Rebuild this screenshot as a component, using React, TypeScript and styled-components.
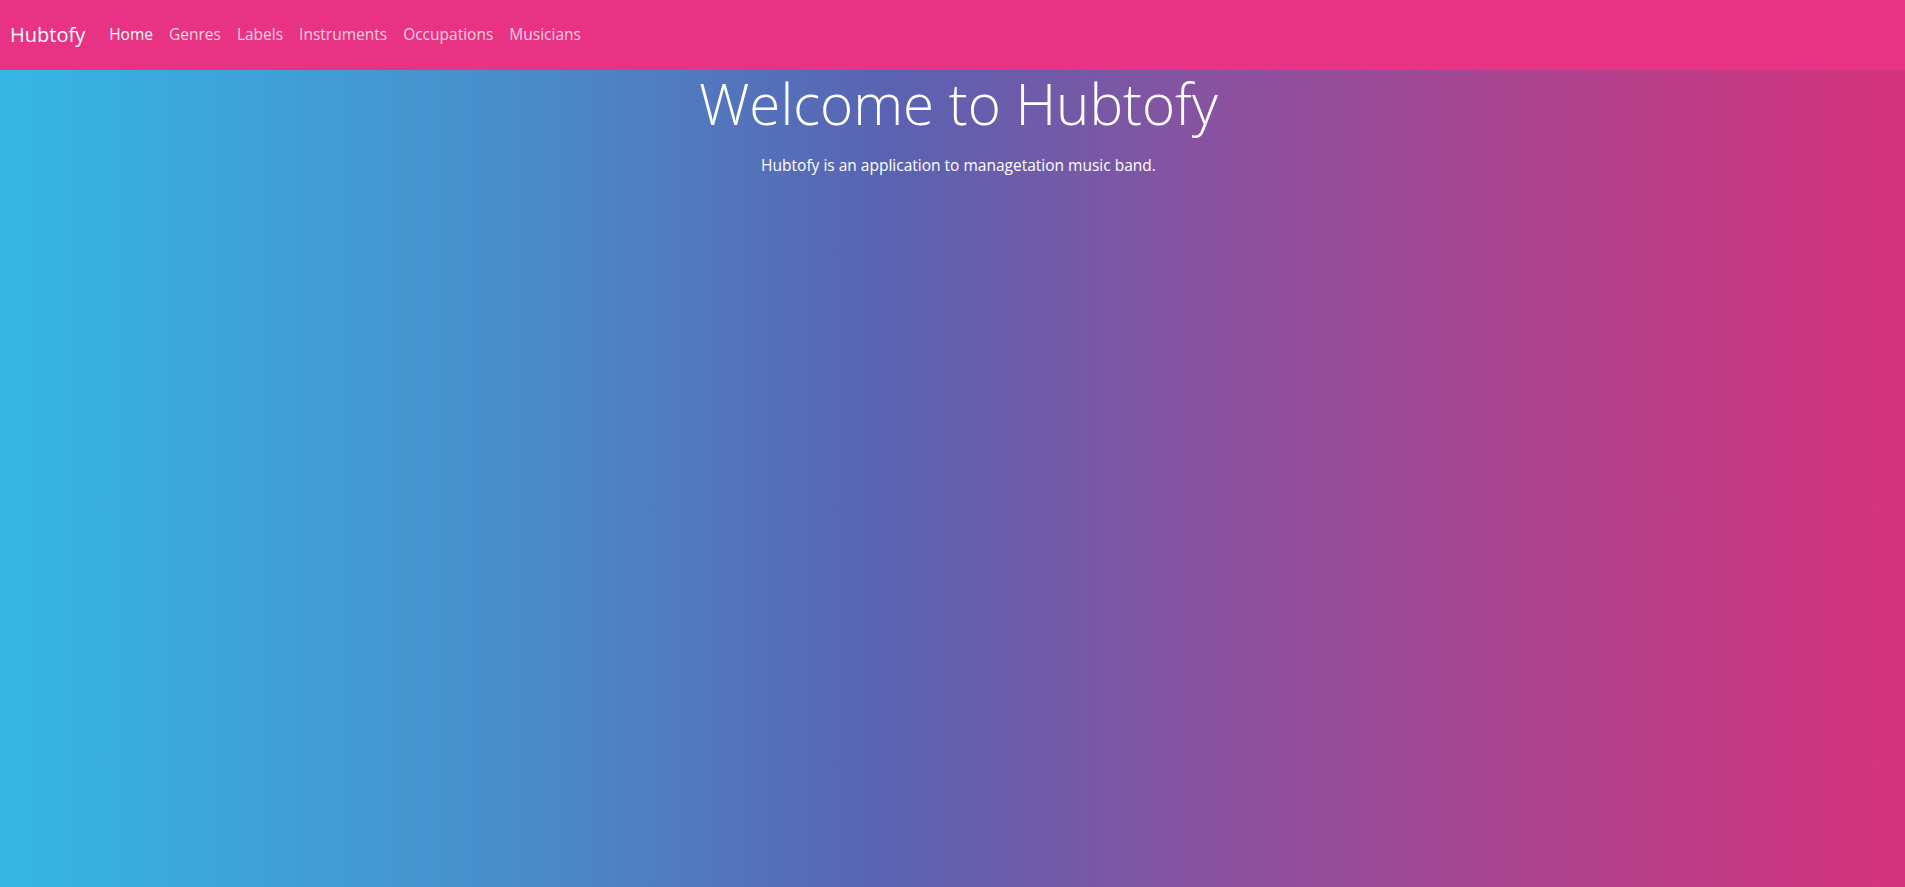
import React from "react";
import styled, { createGlobalStyle } from "styled-components";

const Global = createGlobalStyle`
  html, body { margin: 0; padding: 0; }
  body {
    font-family: "Open Sans", "Noto Sans", "Liberation Sans", sans-serif;
    color: #fff;
  }
  * { box-sizing: border-box; }
`;

const Page = styled.div`
  min-height: 100vh;
  display: flex;
  flex-direction: column;
  background: linear-gradient(to right, #34b7e4 0%, #4a8bca 28%, #5a62b1 47%, #8a52a0 64%, #d6337c 100%);
`;

const NavBar = styled.nav`
  height: 70px;
  background: #e83283;
  display: flex;
  align-items: center;
  padding: 0 10px 2px;
  gap: 24px;
`;

const Brand = styled.a`
  font-size: 20px;
  color: #fff;
  text-decoration: none;
`;

const NavList = styled.ul`
  list-style: none;
  margin: 0;
  padding: 0;
  display: flex;
  gap: 16px;
`;

const NavLink = styled.a<{ $active?: boolean }>`
  font-size: 15.5px;
  color: ${(p) => (p.$active ? "#fff" : "rgba(255,255,255,0.78)")};
  text-decoration: none;
`;

const Hero = styled.main`
  text-align: center;
  padding-left: 12px;
`;

const Title = styled.h1`
  font-size: 56.5px;
  font-weight: 300;
  margin: 0 0 16px;
  line-height: 1.2;
`;

const Lead = styled.p`
  font-size: 15.5px;
  margin: 0;
`;

export default function App() {
  const links = ["Home", "Genres", "Labels", "Instruments", "Occupations", "Musicians"];
  return (
    <>
      <Global />
      <Page>
        <NavBar>
          <Brand href="#">Hubtofy</Brand>
          <NavList>
            {links.map((l, i) => (
              <li key={l}>
                <NavLink href="#" $active={i === 0}>{l}</NavLink>
              </li>
            ))}
          </NavList>
        </NavBar>
        <Hero>
          <Title>Welcome to Hubtofy</Title>
          <Lead>Hubtofy is an application to managetation music band.</Lead>
        </Hero>
      </Page>
    </>
  );
}
